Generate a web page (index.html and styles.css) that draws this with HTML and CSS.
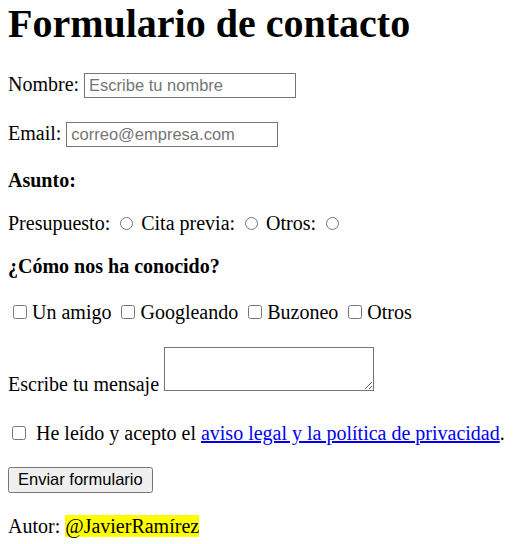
FILE: index.html
```html
<!DOCTYPE html>
<html lang="es">
    <head>
        <meta charset="utf-8">
        <title>Formulario de contacto</title>
        <link rel="stylesheet" href="styles.css">
    </head>
    <body>
        <h1>Formulario de contacto</h1>
        <form>
            <p>Nombre: <input type="text" class="campo" placeholder="Escribe tu nombre"></p>
            <p>Email: <input type="email" class="campo" placeholder="correo@empresa.com"></p>
            <p><b>Asunto:</b></p>
            <p>Presupuesto: <input type="radio" name="asunto"> Cita previa: <input type="radio" name="asunto"> Otros: <input type="radio" name="asunto"></p>
            <p><b>¿Cómo nos ha conocido?</b></p>
            <p><input type="checkbox">Un amigo <input type="checkbox">Googleando <input type="checkbox">Buzoneo <input type="checkbox">Otros</p>
            <p>Escribe tu mensaje <textarea class="mensaje"></textarea></p>
            <p class="aviso"><input type="checkbox"> He leído y acepto el <a href="#">aviso legal y la política de privacidad</a>.</p>
            <input type="submit" class="enviar" value="Enviar formulario">
        </form>
        <p>Autor: <span class="autor">@JavierRamírez</span></p>
    </body>
</html>
```

FILE: styles.css
```css
body {
    margin: 0 8px;
    font-family: "Liberation Serif", "Times New Roman", serif;
    font-size: 20px;
    color: #000;
}
h1 {
    font-size: 40px;
    margin-top: 0;
    margin-bottom: 23.8px;
}
input, textarea {
    font-family: "Liberation Sans", Arial, sans-serif;
    font-size: 16.5px;
}
input[type="radio"] {
    width: 13px;
    height: 13px;
    margin: 4px 3px 0 5px;
}
input[type="checkbox"] {
    width: 14px;
    height: 14px;
    margin: 7px 5px 3px 5px;
}
.campo {
    width: 212px;
    height: 25px;
    margin: 2px 0;
    padding: 1px 4px;
    border: 1px solid #767676;
    box-sizing: border-box;
}
.mensaje {
    width: 210px;
    height: 44px;
    margin-top: 3px;
    border: 1px solid #767676;
    box-sizing: border-box;
}
.aviso {
    margin-top: 25px;
}
.aviso input[type="checkbox"] {
    margin: 5px 5px 3px 4px;
}
.enviar {
    height: 26px;
    margin: 2px 0;
    padding: 1px 8px;
}
.autor {
    background: yellow;
}
```
